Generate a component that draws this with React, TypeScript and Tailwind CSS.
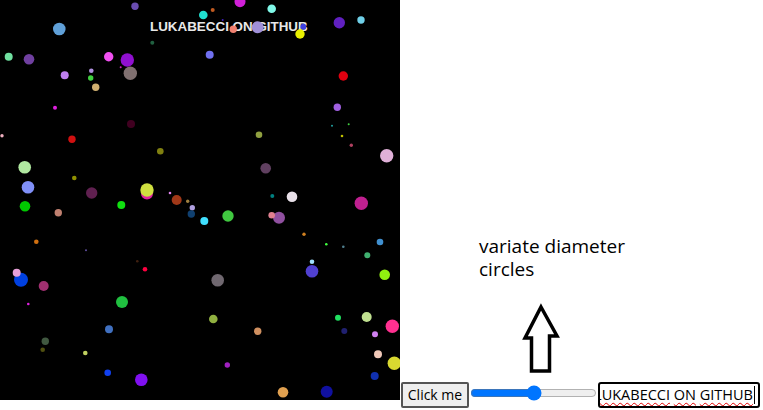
const circles: [number, number, number, string][] = [
  [135, 6.3, 3.7, '#6a4db0'],
  [240, 1.7, 5.5, '#d020d8'],
  [212.7, 10, 2, '#c05a20'],
  [203.3, 15, 4.3, '#20e0d0'],
  [271.7, 8.7, 4.3, '#80f8e8'],
  [361, 20, 3.7, '#70d0e8'],
  [339.3, 22.7, 5.7, '#6020c0'],
  [59.3, 29, 6.3, '#60a0d8'],
  [233.3, 29.3, 3.7, '#f08070'],
  [257.7, 27.3, 6, '#a090d8'],
  [222.7, 20, 1, '#4020c0'],
  [303.3, 26.7, 3, '#4040e0'],
  [300, 34, 4.7, '#e8f000'],
  [152.3, 42.7, 2, '#206040'],
  [8.7, 56.7, 4, '#70e0a0'],
  [29, 59.3, 5.3, '#7040a0'],
  [108.7, 56.7, 4.7, '#f050f0'],
  [127.3, 60, 6.7, '#9010d0'],
  [209.7, 54.7, 4, '#7070f0'],
  [91.3, 70.7, 2.3, '#b090e0'],
  [120.7, 67.3, 1, '#d020c0'],
  [130.3, 73.3, 6.7, '#807070'],
  [64.7, 75.3, 4, '#c080f0'],
  [90.7, 78, 2.7, '#40d040'],
  [95.7, 87.3, 3.7, '#d0b070'],
  [343.3, 76, 4.7, '#e00010'],
  [55, 107.7, 2, '#e020e0'],
  [337.3, 107.3, 3.7, '#a060e0'],
  [332, 125.7, 1, '#20a0a0'],
  [348.7, 124.3, 1, '#40d040'],
  [342, 136, 1.3, '#c0c000'],
  [351.3, 145.3, 1.7, '#b04060'],
  [2, 135.7, 1.7, '#f0b0c0'],
  [131, 124, 4, '#400020'],
  [72, 139.3, 3.7, '#d01010'],
  [259, 134.7, 3.3, '#90a040'],
  [160.3, 151.3, 3.3, '#808010'],
  [386.7, 155.7, 6.7, '#e0b0d8'],
  [24.7, 167.3, 6.3, '#b0e8a0'],
  [265.7, 168.3, 5.3, '#604060'],
  [74.3, 178, 2.3, '#909000'],
  [28, 187.3, 6.3, '#8090f8'],
  [91.7, 193, 5.7, '#602050'],
  [147, 193.5, 6, '#e020a0'],
  [147, 190, 6.7, '#d0e040'],
  [170, 193, 1.3, '#e080f0'],
  [176.7, 200, 5, '#a03818'],
  [272.3, 196, 2, '#008080'],
  [292, 196.7, 5.3, '#e8e0e8'],
  [361.3, 203.3, 6.7, '#c02090'],
  [25, 206.3, 5.3, '#00c800'],
  [58.3, 212.7, 3.7, '#c08070'],
  [121.3, 205, 4, '#10e010'],
  [187.7, 201.3, 1.7, '#a08040'],
  [192.3, 207.7, 2.7, '#b0a0e0'],
  [191.3, 214, 3.7, '#104070'],
  [204.3, 221, 4, '#40e0ff'],
  [228, 216, 5.7, '#40c840'],
  [279, 217.7, 6, '#9050a0'],
  [271.7, 215.3, 3.3, '#e08090'],
  [36.3, 241.7, 2.3, '#d07010'],
  [86, 250.3, 1, '#6050a0'],
  [304, 234.3, 1.7, '#d08020'],
  [326.3, 244.3, 1.3, '#40ff40'],
  [343.3, 246.7, 1.3, '#508090'],
  [380, 242, 3.3, '#4090d0'],
  [367.3, 255.3, 3, '#40b070'],
  [137.3, 261.3, 1.3, '#402010'],
  [145, 269.3, 2.3, '#ff0040'],
  [312, 261.7, 2.3, '#a0e0ff'],
  [21, 279.7, 7, '#0040e0'],
  [16.7, 272.7, 4, '#e8a0d8'],
  [43.7, 286, 5, '#a03070'],
  [217.7, 280.3, 6.3, '#706870'],
  [312, 271.3, 6.3, '#5040d0'],
  [384.7, 274.7, 5.3, '#90f010'],
  [28.3, 304, 1.3, '#e020e0'],
  [122, 302, 6, '#20c040'],
  [213.3, 319, 4.3, '#90b040'],
  [338, 317.7, 3, '#20e060'],
  [366.7, 317, 5, '#c0e090'],
  [392.3, 326.3, 6.7, '#ff3090'],
  [109, 329.3, 4, '#4070c0'],
  [257.7, 331.3, 3.7, '#d09060'],
  [344.3, 331, 3, '#202070'],
  [375, 334.3, 3, '#d080f0'],
  [45.3, 341.3, 3.7, '#405840'],
  [42.7, 349.7, 2.3, '#505010'],
  [85.3, 353, 2.3, '#c0d060'],
  [378, 354.3, 4, '#f0c8b8'],
  [394.3, 363.3, 6.7, '#d8d830'],
  [227.3, 365, 2.7, '#a020c0'],
  [107.7, 372.7, 3.3, '#1040f0'],
  [141.3, 379.7, 6.3, '#8010f0'],
  [374.7, 376, 4, '#1030b0'],
  [283, 392.3, 5.3, '#e0a050'],
  [326.7, 391.7, 6, '#1010a0'],
];

function Canvas() {
  return (
    <svg width="400" height="400" className="block shrink-0 bg-black">
      <text
        x="150"
        y="31"
        fill="#e8e8e8"
        fontSize="13.4"
        fontWeight="bold"
        fontFamily="'Liberation Sans', Arial, sans-serif"
      >
        LUKABECCI ON GITHUB
      </text>
      {circles.map(([cx, cy, r, c], i) => (
        <circle key={i} cx={cx} cy={cy} r={r} fill={c} />
      ))}
    </svg>
  );
}

function Squiggle({ children }: { children: string }) {
  return <span className="underline decoration-wavy decoration-[#e00000] decoration-1 underline-offset-2">{children}</span>;
}

export default function App() {
  return (
    <div className="flex h-[410px] w-[763px] overflow-hidden bg-white" style={{ fontFamily: "'Open Sans', 'Noto Sans', sans-serif" }}>
      <Canvas />
      <div className="flex flex-col">
        <p className="ml-[79px] mt-[235px] w-[170px] text-[19px] leading-[23px] text-black">variate diameter circles</p>
        <svg width="44" height="76" className="ml-[121px] mt-[20px] block">
          <polygon
            points="20,6 36,35 28.5,35 28.5,70 10.5,70 10.5,37 4,37"
            fill="none"
            stroke="#000"
            strokeWidth="3.5"
            strokeLinejoin="miter"
          />
        </svg>
        <div className="mt-[5px] flex items-center">
          <button className="ml-px h-[26px] w-[68px] shrink-0 whitespace-nowrap rounded-[2px] border-2 border-[#555] bg-[#efefef] text-[14px] leading-none text-black">
            Click me
          </button>
          <input type="range" defaultValue={50} className="mx-[1px] mb-[4px] w-[127px] shrink-0" />
          <div className="flex h-[26px] w-[162px] shrink-0 items-center justify-end overflow-hidden whitespace-nowrap rounded-[3px] border-2 border-black pr-[3px] text-[14.5px] text-black">
            <Squiggle>LUKABECCI</Squiggle>
            <span>&nbsp;</span>
            <Squiggle>ON</Squiggle>
            <span>&nbsp;</span>
            <Squiggle>GITHUB</Squiggle>
            <span className="ml-px h-[18px] w-px shrink-0 bg-black" />
          </div>
        </div>
      </div>
    </div>
  );
}
